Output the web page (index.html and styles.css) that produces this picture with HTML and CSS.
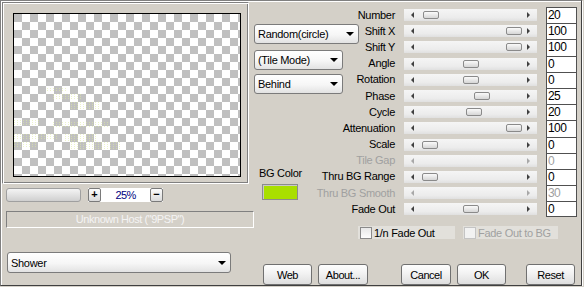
FILE: index.html
```html
<!DOCTYPE html>
<html>
<head>
<meta charset="utf-8">
<link rel="stylesheet" href="styles.css">
</head>
<body>
<div class="window">
  <div class="left">
    <div class="preview">
      <div class="checker">
        <svg class="sparkle" width="226" height="162" viewBox="0 0 226 162">
          <defs>
            <pattern id="dots" width="3" height="2" patternUnits="userSpaceOnUse">
              <rect width="1" height="1" fill="#dfeca0"/>
            </pattern>
          </defs>
          <g fill="url(#dots)">
            <rect x="33" y="73" width="20" height="5"/>
            <rect x="39" y="80" width="30" height="5"/>
            <rect x="56" y="88" width="30" height="7"/>
            <rect x="0" y="106" width="27" height="5"/>
            <rect x="39" y="107" width="57" height="6"/>
            <rect x="0" y="120" width="44" height="5"/>
            <rect x="49" y="120" width="34" height="7"/>
            <rect x="0" y="128" width="24" height="5"/>
            <rect x="56" y="128" width="50" height="7"/>
          </g>
        </svg>
      </div>
    </div>
    <div class="zoomrow">
      <div class="zoombar"></div>
      <div class="zoomfield">
        <span class="tinybtn">+</span>
        <span class="zoomval">25%</span>
        <span class="tinybtn">&minus;</span>
      </div>
    </div>
    <div class="host">Unknown Host ("9PSP")</div>
    <div class="combo shower"><span>Shower</span><i class="arrow"></i></div>
  </div>

  <div class="main">
    <div class="top">
      <div class="mid">
        <div class="combo c-random"><span>Random(circle)</span><i class="arrow"></i></div>
        <div class="combo c-tile"><span>(Tile Mode)</span><i class="arrow"></i></div>
        <div class="combo c-behind"><span>Behind</span><i class="arrow"></i></div>
        <div class="bglabel">BG Color</div>
        <div class="swatch"></div>
      </div>
      <div class="right">
        <div class="sliders">
          <div class="lbl">Number</div>
          <div class="track"><span class="thumb" style="left:19px"></span></div>
          <div class="val">20</div>

          <div class="lbl">Shift X</div>
          <div class="track"><span class="thumb" style="left:102px"></span></div>
          <div class="val">100</div>

          <div class="lbl">Shift Y</div>
          <div class="track"><span class="thumb" style="left:102px"></span></div>
          <div class="val">100</div>

          <div class="lbl">Angle</div>
          <div class="track"><span class="thumb" style="left:59px"></span></div>
          <div class="val">0</div>

          <div class="lbl">Rotation</div>
          <div class="track"><span class="thumb" style="left:59px"></span></div>
          <div class="val">0</div>

          <div class="lbl">Phase</div>
          <div class="track"><span class="thumb" style="left:70px"></span></div>
          <div class="val">25</div>

          <div class="lbl">Cycle</div>
          <div class="track"><span class="thumb" style="left:62px"></span></div>
          <div class="val">20</div>

          <div class="lbl">Attenuation</div>
          <div class="track"><span class="thumb" style="left:102px"></span></div>
          <div class="val">100</div>

          <div class="lbl">Scale</div>
          <div class="track"><span class="thumb" style="left:18px"></span></div>
          <div class="val">0</div>

          <div class="lbl disabled">Tile Gap</div>
          <div class="track disabled"></div>
          <div class="val disabled">0</div>

          <div class="lbl">Thru BG Range</div>
          <div class="track"><span class="thumb" style="left:18px"></span></div>
          <div class="val">0</div>

          <div class="lbl disabled">Thru BG Smooth</div>
          <div class="track disabled"></div>
          <div class="val disabled">30</div>

          <div class="lbl">Fade Out</div>
          <div class="track"><span class="thumb" style="left:59px"></span></div>
          <div class="val last">0</div>
        </div>
        <div class="checks">
          <label class="check c1"><span class="box"></span><span>1/n Fade Out</span></label>
          <label class="check c2 disabled"><span class="box"></span><span>Fade Out to BG</span></label>
        </div>
      </div>
    </div>
    <div class="buttons">
      <div class="btn b-web">Web</div>
      <div class="btn b-about">About...</div>
      <div class="btn b-cancel">Cancel</div>
      <div class="btn b-ok">OK</div>
      <div class="btn b-reset">Reset</div>
    </div>
  </div>
</div>
</body>
</html>
```

FILE: styles.css
```css
html, body {
  margin: 0;
  padding: 0;
  background: #d4d0c8;
}

body {
  font-family: "Liberation Sans", Arial, sans-serif;
  font-size: 11px;
  letter-spacing: -0.3px;
  color: #000;
}

.window {
  box-sizing: border-box;
  width: 582px;
  height: 286px;
  border: 1px solid;
  border-color: #808080 #404040 #404040 #808080;
  box-shadow: inset 1px 1px 0 #fff, 1px 1px 0 #fff;
  display: flex;
}

/* ---------- left column ---------- */
.left {
  width: 252px;
  margin-left: 1px;
  display: flex;
  flex-direction: column;
  align-items: flex-start;
}

.preview {
  box-sizing: border-box;
  width: 247px;
  height: 182px;
  margin-top: 1px;
  border: 1px solid;
  border-color: #808080 #fff #fff #808080;
  box-shadow: inset 1px 1px 0 #fff, inset -1px -1px 0 #808080;
  padding: 10px 0 0 10px;
}

.checker {
  position: relative;
  box-sizing: border-box;
  width: 228px;
  height: 164px;
  border: 1px solid #000;
  background-color: #fff;
  background-image: conic-gradient(#fff 0 25%, #c0c0c0 0 50%, #fff 0 75%, #c0c0c0 0);
  background-size: 16px 16px;
}

.sparkle {
  position: absolute;
  left: 0;
  top: 0;
  opacity: 0.55;
}

.zoomrow {
  display: flex;
  gap: 7px;
  margin-top: 4px;
  margin-left: 4px;
  height: 14px;
}

.zoombar {
  box-sizing: border-box;
  width: 75px;
  height: 14px;
  border: 1px solid #a0a0a0;
  border-radius: 3px;
  background: linear-gradient(#f4f4f4, #e2e2e2 50%, #cfcfcf);
}

.zoomfield {
  width: 75px;
  height: 14px;
  background: #fff;
  display: flex;
  align-items: center;
  justify-content: space-between;
}

.tinybtn {
  box-sizing: border-box;
  width: 13px;
  height: 14px;
  border: 1px solid #7a7a7a;
  border-radius: 2px;
  background: linear-gradient(#fcfcfc, #dadada);
  font-size: 11px;
  font-weight: bold;
  line-height: 11px;
  text-align: center;
  letter-spacing: 0;
}

.zoomval {
  color: #000080;
  font-size: 11px;
  letter-spacing: -0.6px;
}

.host {
  box-sizing: border-box;
  margin-top: 9px;
  margin-left: 4px;
  width: 248px;
  height: 17px;
  border: 1px solid;
  border-color: #808080 #fff #fff #808080;
  text-align: center;
  line-height: 15px;
  color: #f4f4f4;
  letter-spacing: -0.45px;
}

.combo {
  box-sizing: border-box;
  height: 20px;
  border: 1px solid #7b7b7b;
  border-radius: 3px;
  background: linear-gradient(#ffffff, #f6f6f6 55%, #e2e2e2);
  display: flex;
  align-items: center;
  justify-content: space-between;
  padding: 0 4px 0 3px;
  white-space: nowrap;
}

.arrow {
  width: 0;
  height: 0;
  border-top: 4px solid #000;
  border-left: 4px solid transparent;
  border-right: 4px solid transparent;
}

.shower {
  margin-top: 24px;
  margin-left: 5px;
  width: 224px;
  height: 21px;
}

/* ---------- main area ---------- */
.main {
  flex: 1;
  display: flex;
  flex-direction: column;
}

.top {
  flex: 1;
  display: flex;
}

.mid {
  width: 100px;
  display: flex;
  flex-direction: column;
  align-items: flex-start;
}

.c-random {
  margin-top: 23px;
  width: 105px;
}

.c-tile {
  margin-top: 6px;
  width: 89px;
}

.c-behind {
  margin-top: 4px;
  width: 89px;
}

.bglabel {
  margin-top: 73px;
  margin-left: 5px;
  line-height: 13px;
}

.swatch {
  box-sizing: border-box;
  margin-top: 4px;
  margin-left: 8px;
  width: 36px;
  height: 16px;
  border: 1px solid #8c8c8c;
  box-shadow: inset 1px 1px 0 #c8c8c8;
  background: #a9df00;
}

.right {
  flex: 1;
  padding-top: 6px;
}

.sliders {
  display: grid;
  grid-template-columns: 41px 133px 31px;
  grid-auto-rows: 16.2px;
  column-gap: 9px;
  align-items: center;
}

.lbl {
  display: flex;
  justify-content: flex-end;
  white-space: nowrap;
  line-height: 13px;
}

.lbl.disabled,
.val.disabled,
.check.disabled {
  color: #a0a0a0;
}

.track {
  position: relative;
  height: 12px;
  background: linear-gradient(#f5f5f5, #ececec 70%, #e0e0e0);
}

.track::before,
.track::after {
  content: "";
  position: absolute;
  top: 3px;
  width: 0;
  height: 0;
  border-top: 3px solid transparent;
  border-bottom: 3px solid transparent;
}

.track::before {
  left: 7px;
  border-right: 3px solid #404040;
}

.track::after {
  right: 7px;
  border-left: 3px solid #404040;
}

.track.disabled::before {
  border-right-color: #a8a8a8;
}

.track.disabled::after {
  border-left-color: #a8a8a8;
}

.thumb {
  position: absolute;
  top: 2px;
  box-sizing: border-box;
  width: 16px;
  height: 8px;
  border: 1px solid #8a8a8a;
  border-radius: 2px;
  background: linear-gradient(#fafafa, #d6d6d6);
}

.val {
  align-self: stretch;
  box-sizing: border-box;
  border: 1px solid #505050;
  border-bottom: 0;
  background: #fff;
  font-size: 12px;
  letter-spacing: -0.6px;
  line-height: 15px;
  padding-left: 1px;
}

.val.last {
  border-bottom: 1px solid #505050;
}

.checks {
  display: flex;
  gap: 8px;
  margin-top: 9px;
  margin-left: 4px;
  height: 13px;
}

.check {
  display: flex;
  align-items: center;
  gap: 2px;
  background: #e2e0db;
  white-space: nowrap;
}

.c1 {
  width: 97px;
  padding-left: 2px;
  box-sizing: border-box;
}

.c2 {
  width: 95px;
  padding-left: 1px;
  box-sizing: border-box;
}

.box {
  box-sizing: border-box;
  width: 12px;
  height: 12px;
  border: 1px solid #8a8a8a;
  background: linear-gradient(#e8e8e8, #fdfdfd);
}

.check.disabled .box {
  border-color: #c4c4c4;
  background: #f2f2f2;
}

.buttons {
  display: flex;
  height: 21px;
  padding-left: 9px;
}

.btn {
  box-sizing: border-box;
  height: 21px;
  border: 1px solid #707070;
  border-radius: 3px;
  background: linear-gradient(#fefefe, #f2f2f2 45%, #dedede);
  display: flex;
  align-items: center;
  justify-content: center;
  letter-spacing: -0.45px;
}

.b-web { width: 49px; }
.b-about { width: 50px; margin-left: 6px; }
.b-cancel { width: 50px; margin-left: 33px; }
.b-ok { width: 49px; margin-left: 6px; }
.b-reset { width: 49px; margin-left: 20px; }
```
